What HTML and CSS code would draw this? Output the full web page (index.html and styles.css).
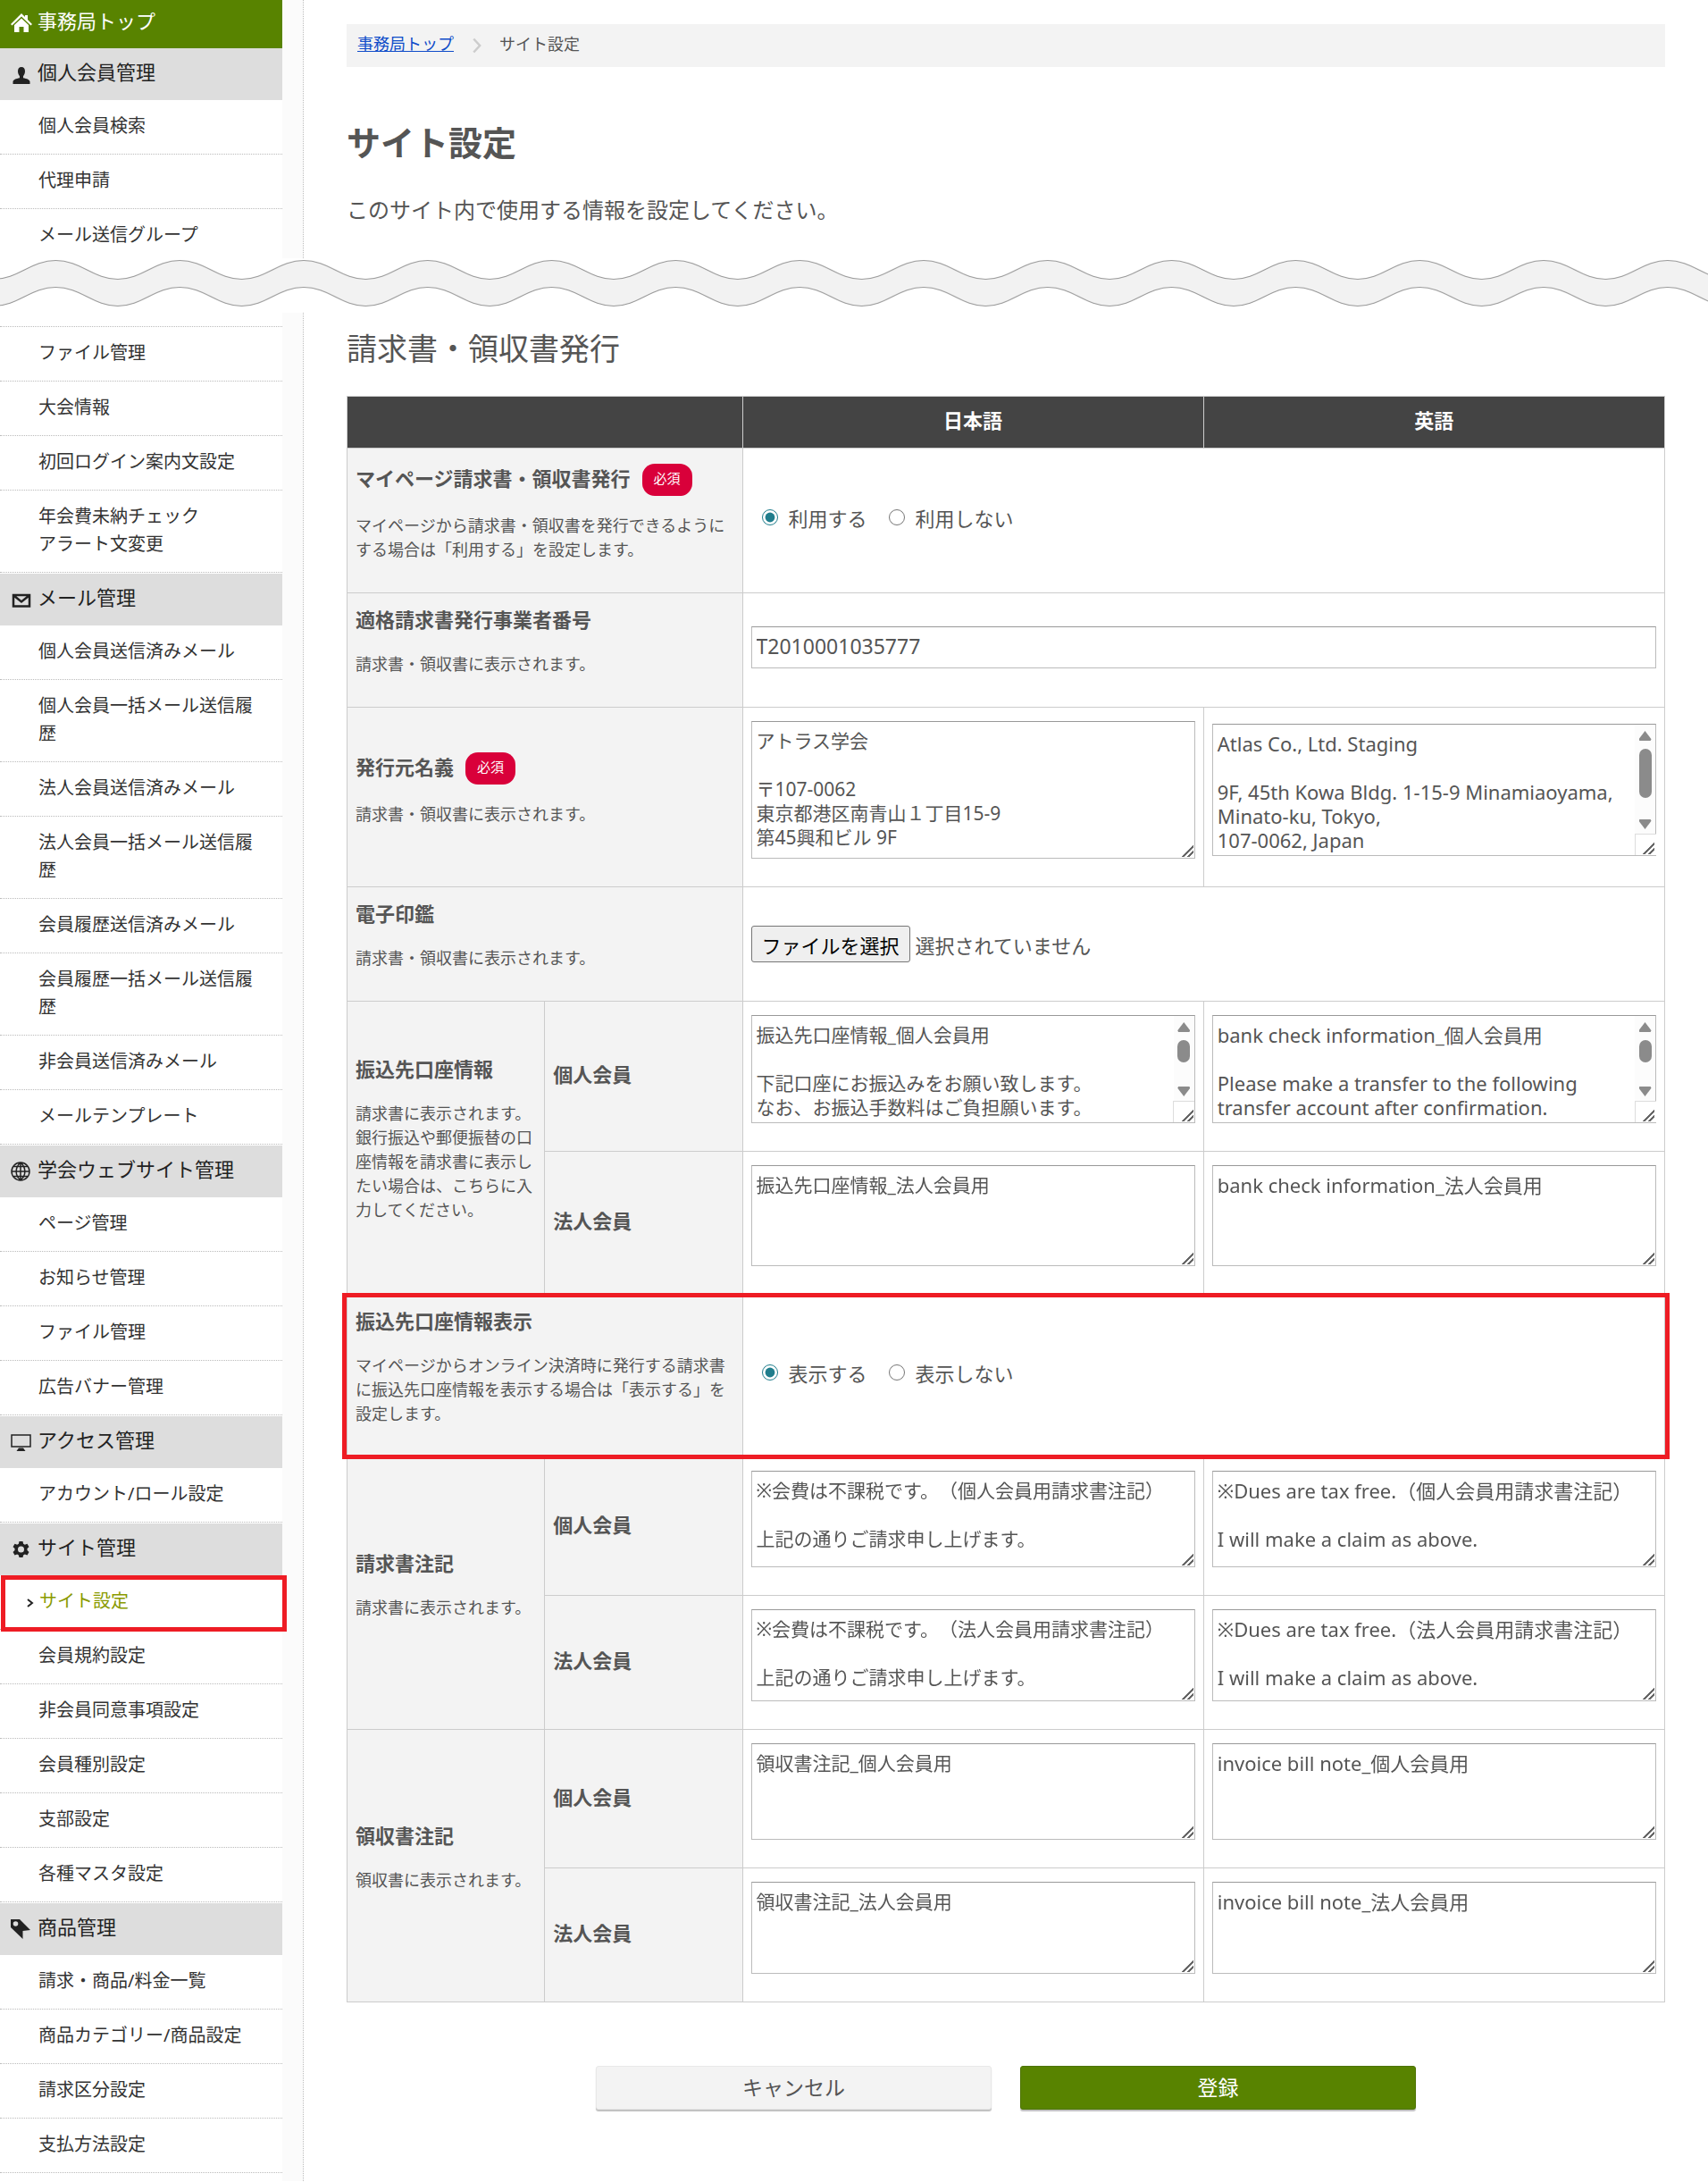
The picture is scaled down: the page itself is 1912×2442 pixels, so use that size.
FILE: index.html
```
<!DOCTYPE html>
<html lang="ja">
  <head>
    <meta charset="UTF-8" />
    <meta name="viewport" content="width=device-width, initial-scale=1.0" />
    <title>サイト設定</title>
    <link rel="stylesheet" href="styles.css">
  </head>
  <body>
    <div class="page page-top">
      <nav class="sidebar">
        <a class="menu-home" href="#">
          <svg class="icon" viewBox="0 0 24 24"><path d="M12 1 16 5V3h3v5l5 5-1.500 1.500L12 4.500 1.500 14.500 0 13z"/><path d="M12 6.500 20 14v8h-5.500V16h-5v6H4V14z"/></svg>
          事務局トップ
        </a>
        <div class="menu-group">
          <h3 class="menu-head">
            <svg class="icon" viewBox="0 0 24 24"><path d="M12 4c2.600 0 4 1.800 4 4.800 0 2.200-.8 4.200-2 5.400v2c4 .8 7.500 2 7.500 4.300V23h-19v-2.500c0-2.300 3.500-3.500 7.500-4.300v-2c-1.200-1.200-2-3.200-2-5.400C8 5.800 9.400 4 12 4z"/></svg>
            個人会員管理
          </h3>
          <ul>
            <li><a href="#">個人会員検索</a></li>
            <li><a href="#">代理申請</a></li>
            <li class="cut"><a href="#">メール送信グループ</a></li>
          </ul>
        </div>
      </nav>
      <main class="content">
        <div class="breadcrumb">
          <a href="#">事務局トップ</a>
          <svg viewBox="0 0 8 14"><path d="M1 1l5.500 6L1 13"/></svg>
          <span>サイト設定</span>
        </div>
        <h1>サイト設定</h1>
        <p class="lead">このサイト内で使用する情報を設定してください。</p>
      </main>
    </div>

    <svg class="wave" height="61">
      <defs>
        <pattern id="waves" x="-7" width="138.800" height="61" patternUnits="userSpaceOnUse">
          <path class="wave-fill" d="M0 23.500C27 23.500 42 2.500 69.400 2.500S111.800 23.500 138.800 23.500V53.500C111.800 53.500 96.800 32.500 69.400 32.500S27 53.500 0 53.500z"/>
          <path class="wave-line" d="M-1 23.500H0C27 23.500 42 2.500 69.400 2.500S111.800 23.500 138.800 23.500h1M-1 53.500H0C27 53.500 42 32.500 69.400 32.500S111.800 53.500 138.800 53.500h1"/>
        </pattern>
      </defs>
      <rect width="100%" height="61" fill="url(#waves)"/>
    </svg>

    <div class="page page-bottom">
      <nav class="sidebar">
        <div class="menu-group">
          <ul>
            <li><a href="#">ファイル管理</a></li>
            <li><a href="#">大会情報</a></li>
            <li><a href="#">初回ログイン案内文設定</a></li>
            <li><a href="#">年会費未納チェック<br>アラート文変更</a></li>
          </ul>
        </div>
        <div class="menu-group">
          <h3 class="menu-head">
            <svg class="icon" viewBox="0 0 24 24"><path class="stroke" d="M3 7h18v12.500H3zM4 8l8 6.500L20 8"/></svg>
            メール管理
          </h3>
          <ul>
            <li><a href="#">個人会員送信済みメール</a></li>
            <li><a href="#">個人会員一括メール送信履歴</a></li>
            <li><a href="#">法人会員送信済みメール</a></li>
            <li><a href="#">法人会員一括メール送信履歴</a></li>
            <li><a href="#">会員履歴送信済みメール</a></li>
            <li><a href="#">会員履歴一括メール送信履歴</a></li>
            <li><a href="#">非会員送信済みメール</a></li>
            <li><a href="#">メールテンプレート</a></li>
          </ul>
        </div>
        <div class="menu-group">
          <h3 class="menu-head">
            <svg class="icon" viewBox="0 0 24 24"><path class="stroke thin" d="M11 2a10 10 0 1 0 0 20 10 10 0 0 0 0-20zM11 2v20M1 12h20M3 6.500h16M3 17.500h16M11 2C4.500 8 4.500 16 11 22M11 2c6.500 6 6.500 14 0 20"/></svg>
            学会ウェブサイト管理
          </h3>
          <ul>
            <li><a href="#">ページ管理</a></li>
            <li><a href="#">お知らせ管理</a></li>
            <li><a href="#">ファイル管理</a></li>
            <li><a href="#">広告バナー管理</a></li>
          </ul>
        </div>
        <div class="menu-group">
          <h3 class="menu-head">
            <svg class="icon" viewBox="0 0 24 24"><path class="stroke thin" d="M1 4h21v13H1z"/><path d="M9 18.500h5l2.500 3.500h-10z"/></svg>
            アクセス管理
          </h3>
          <ul>
            <li><a href="#">アカウント/ロール設定</a></li>
          </ul>
        </div>
        <div class="menu-group">
          <h3 class="menu-head">
            <svg class="icon" viewBox="0 0 24 24"><path fill-rule="evenodd" d="M9.500 3h4l.6 2.700 1.700 1 2.700-.9 2 3.400-2 1.900v2l2 1.900-2 3.400-2.700-.9-1.700 1-.6 2.500h-4l-.6-2.500-1.700-1-2.700.9-2-3.400 2-1.900v-2l-2-1.900 2-3.400 2.700.9 1.700-1zM11.500 8.500a3.500 3.500 0 1 0 0 7 3.500 3.500 0 0 0 0-7z"/></svg>
            サイト管理
          </h3>
          <ul>
            <li class="current"><a href="#"><svg class="arrow" viewBox="0 0 8 10"><path d="M1 1l5 4-5 4"/></svg>サイト設定</a></li>
            <li><a href="#">会員規約設定</a></li>
            <li><a href="#">非会員同意事項設定</a></li>
            <li><a href="#">会員種別設定</a></li>
            <li><a href="#">支部設定</a></li>
            <li><a href="#">各種マスタ設定</a></li>
          </ul>
        </div>
        <div class="menu-group">
          <h3 class="menu-head">
            <svg class="icon" viewBox="0 0 24 24"><path fill-rule="evenodd" d="M0 1h10l12 12-8.500 1v9L0 10zM5.500 3.200a2.800 2.800 0 1 0 0 5.600 2.800 2.800 0 0 0 0-5.600z"/></svg>
            商品管理
          </h3>
          <ul>
            <li><a href="#">請求・商品/料金一覧</a></li>
            <li><a href="#">商品カテゴリー/商品設定</a></li>
            <li><a href="#">請求区分設定</a></li>
            <li><a href="#">支払方法設定</a></li>
          </ul>
        </div>
      </nav>

      <main class="content">
        <h2>請求書・領収書発行</h2>
        <form id="settingForm">
          <table class="setting">
            <colgroup>
              <col class="col-head"><col class="col-head"><col class="col-value"><col class="col-value">
            </colgroup>
            <thead>
              <tr>
                <th colspan="2"></th>
                <th scope="col">日本語</th>
                <th scope="col">英語</th>
              </tr>
            </thead>
            <tbody>
              <tr>
                <th colspan="2" scope="row">
                  <div class="title">マイページ請求書・領収書発行<span class="required">必須</span></div>
                  <p>マイページから請求書・領収書を発行できるようにする場合は「利用する」を設定します。</p>
                </th>
                <td colspan="2">
                  <div class="radios">
                    <label><input type="radio" name="use_invoice" checked>利用する</label>
                    <label><input type="radio" name="use_invoice">利用しない</label>
                  </div>
                </td>
              </tr>
              <tr>
                <th colspan="2" scope="row">
                  <label class="title" for="invoice_no">適格請求書発行事業者番号</label>
                  <p>請求書・領収書に表示されます。</p>
                </th>
                <td colspan="2"><input type="text" id="invoice_no" value="T2010001035777"></td>
              </tr>
              <tr>
                <th colspan="2" scope="row">
                  <div class="title">発行元名義<span class="required">必須</span></div>
                  <p>請求書・領収書に表示されます。</p>
                </th>
                <td>
                  <div class="area">
                    <textarea class="h-issuer" aria-label="発行元名義 日本語">アトラス学会

〒107-0062
東京都港区南青山１丁目15-9
第45興和ビル 9F</textarea>
                  </div>
                </td>
                <td>
                  <div class="area en scroll">
                    <textarea class="h-issuer-en" aria-label="発行元名義 英語">Atlas Co., Ltd. Staging

9F, 45th Kowa Bldg. 1-15-9 Minamiaoyama,
Minato-ku, Tokyo,
107-0062, Japan


</textarea>
                    <div class="scrollbar"><i class="up"></i><i class="thumb thumb-long"></i><i class="down"></i></div>
                  </div>
                </td>
              </tr>
              <tr>
                <th colspan="2" scope="row">
                  <label class="title" for="seal">電子印鑑</label>
                  <p>請求書・領収書に表示されます。</p>
                </th>
                <td colspan="2">
                  <div class="file">
                    <input type="file" id="seal" hidden>
                    <button type="button" id="sealBtn">ファイルを選択</button>
                    <span id="sealName">選択されていません</span>
                  </div>
                </td>
              </tr>
              <tr>
                <th rowspan="2" scope="rowgroup">
                  <div class="title">振込先口座情報</div>
                  <p>請求書に表示されます。<br>銀行振込や郵便振替の口座情報を請求書に表示したい場合は、こちらに入力してください。</p>
                </th>
                <th scope="row">個人会員</th>
                <td>
                  <div class="area scroll">
                    <textarea class="h-bank" aria-label="振込先口座情報 個人会員 日本語">振込先口座情報_個人会員用

下記口座にお振込みをお願い致します。
なお、お振込手数料はご負担願います。




</textarea>
                    <div class="scrollbar"><i class="up"></i><i class="thumb"></i><i class="down"></i></div>
                  </div>
                </td>
                <td>
                  <div class="area en scroll">
                    <textarea class="h-bank" aria-label="振込先口座情報 個人会員 英語">bank check information_個人会員用

Please make a transfer to the following transfer account after confirmation.




</textarea>
                    <div class="scrollbar"><i class="up"></i><i class="thumb"></i><i class="down"></i></div>
                  </div>
                </td>
              </tr>
              <tr>
                <th scope="row">法人会員</th>
                <td><div class="area"><textarea class="h-bank-corp" aria-label="振込先口座情報 法人会員 日本語">振込先口座情報_法人会員用</textarea></div></td>
                <td><div class="area en"><textarea class="h-bank-corp" aria-label="振込先口座情報 法人会員 英語">bank check information_法人会員用</textarea></div></td>
              </tr>
              <tr class="marked">
                <th colspan="2" scope="row">
                  <div class="title">振込先口座情報表示</div>
                  <p>マイページからオンライン決済時に発行する請求書に振込先口座情報を表示する場合は「表示する」を設定します。</p>
                </th>
                <td colspan="2">
                  <div class="radios">
                    <label><input type="radio" name="show_bank" checked>表示する</label>
                    <label><input type="radio" name="show_bank">表示しない</label>
                  </div>
                </td>
              </tr>
              <tr>
                <th rowspan="2" scope="rowgroup">
                  <div class="title">請求書注記</div>
                  <p>請求書に表示されます。</p>
                </th>
                <th scope="row">個人会員</th>
                <td><div class="area"><textarea class="h-note" aria-label="請求書注記 個人会員 日本語">※会費は不課税です。（個人会員用請求書注記）

上記の通りご請求申し上げます。</textarea></div></td>
                <td><div class="area en"><textarea class="h-note" aria-label="請求書注記 個人会員 英語">※Dues are tax free.（個人会員用請求書注記）

I will make a claim as above.</textarea></div></td>
              </tr>
              <tr>
                <th scope="row">法人会員</th>
                <td><div class="area"><textarea class="h-note-corp" aria-label="請求書注記 法人会員 日本語">※会費は不課税です。（法人会員用請求書注記）

上記の通りご請求申し上げます。</textarea></div></td>
                <td><div class="area en"><textarea class="h-note-corp" aria-label="請求書注記 法人会員 英語">※Dues are tax free.（法人会員用請求書注記）

I will make a claim as above.</textarea></div></td>
              </tr>
              <tr>
                <th rowspan="2" scope="rowgroup">
                  <div class="title">領収書注記</div>
                  <p>領収書に表示されます。</p>
                </th>
                <th scope="row">個人会員</th>
                <td><div class="area"><textarea class="h-note" aria-label="領収書注記 個人会員 日本語">領収書注記_個人会員用</textarea></div></td>
                <td><div class="area en"><textarea class="h-note" aria-label="領収書注記 個人会員 英語">invoice bill note_個人会員用</textarea></div></td>
              </tr>
              <tr>
                <th scope="row">法人会員</th>
                <td><div class="area"><textarea class="h-note-corp" aria-label="領収書注記 法人会員 日本語">領収書注記_法人会員用</textarea></div></td>
                <td><div class="area en"><textarea class="h-note-corp" aria-label="領収書注記 法人会員 英語">invoice bill note_法人会員用</textarea></div></td>
              </tr>
            </tbody>
          </table>
          <div class="buttons">
            <button type="button" class="btn">キャンセル</button>
            <button type="submit" class="btn btn-primary">登録</button>
          </div>
        </form>
      </main>
    </div>
    <script>
      const seal = document.getElementById("seal");
      document.getElementById("sealBtn").onclick = function () {
        seal.click();
      };
      seal.onchange = function () {
        document.getElementById("sealName").innerText = seal.files.length
          ? seal.files[0].name
          : "選択されていません";
      };
    </script>
  </body>
</html>
```

FILE: styles.css
```
* {
  box-sizing: border-box;
}
body {
  margin: 0;
  font-family: "Noto Sans", "Noto Sans CJK JP", sans-serif;
  font-size: 22px;
  text-spacing-trim: space-all;
  color: #555;
  background: #fff;
}
h1, h2, h3, p, ul {
  margin: 0;
  padding: 0;
}
button,
input,
textarea {
  font-family: inherit;
  color: inherit;
  text-spacing-trim: inherit;
}
.page {
  display: flex;
}
.page-top {
  height: 289px;
  overflow: hidden;
}

/* sidebar */
.sidebar {
  flex: none;
  width: 340px;
  padding-right: 23px;
  background: linear-gradient(90deg, #fff 316px, #fbfbfb 316px);
  border-right: 1px dotted #bbb;
}
.menu-home,
.menu-head {
  display: flex;
  align-items: center;
  gap: 6px;
  padding: 0 0 6px 12px;
  font-size: 22px;
  font-weight: 400;
  line-height: 32px;
}
.menu-home {
  height: 54px;
  padding-bottom: 8px;
  background: #588300;
  color: #fff;
  text-decoration: none;
}
.menu-head {
  height: 58px;
  background: #ddd;
  color: #222;
}
.icon {
  flex: none;
  width: 24px;
  height: 24px;
  margin-top: 6px;
  fill: currentColor;
}
.icon .stroke {
  fill: none;
  stroke: currentColor;
  stroke-width: 2.5;
}
.icon .thin {
  stroke-width: 1.5;
}
.menu-group ul {
  list-style: none;
  padding-bottom: 1px;
}
.menu-group li {
  padding: 13px 24px 16px 43px;
  border-bottom: 1px dotted #bbb;
  font-size: 20px;
  line-height: 31px;
}
.menu-group li.cut {
  border-bottom: none;
}
.menu-group a {
  color: #333;
  text-decoration: none;
}
.menu-group .menu-home,
.menu-home {
  color: #fff;
}
.menu-group .current {
  position: relative;
}
.menu-group .current::after {
  content: "";
  position: absolute;
  inset: 0 -5px -3px 1px;
  border: 5px solid #ee1c24;
}
.menu-group .current a {
  color: #8a9a00;
}
.arrow {
  width: 8px;
  height: 10px;
  margin: 0 6px 0 -13px;
  fill: none;
  stroke: #222;
  stroke-width: 2;
}
.page-bottom .sidebar {
  padding-bottom: 8px;
}
.page-bottom .menu-group:first-child {
  padding-top: 15px;
}
.page-bottom .menu-group:first-child ul {
  border-top: 1px dotted #bbb;
}

/* torn part between the two halves */
.wave {
  display: block;
  width: 100%;
}
.wave-fill {
  fill: #f2f2f2;
}
.wave-line {
  fill: none;
  stroke: #999;
  stroke-width: 1.2;
}

/* main */
.content {
  flex: 1;
  min-width: 0;
  padding: 0 48px;
}
.breadcrumb {
  display: flex;
  align-items: center;
  height: 48px;
  margin-top: 27px;
  padding: 0 12px 6px;
  background: #f3f3f3;
  font-size: 18px;
}
.breadcrumb a {
  color: #0f4cc9;
}
.breadcrumb svg {
  width: 10px;
  height: 18px;
  margin: 6px 20px 0 21px;
  fill: none;
  stroke: #ccc;
  stroke-width: 2;
}
h1 {
  margin-top: 56px;
  font-size: 38px;
  line-height: 56px;
}
.lead {
  margin-top: 30px;
  font-size: 24px;
  line-height: 36px;
}
h2 {
  margin: 15px 0 27px;
  font-size: 34px;
  font-weight: 400;
  line-height: 51px;
}

/* settings table */
.setting {
  width: 100%;
  table-layout: fixed;
  border-collapse: collapse;
}
.col-head {
  width: 15%;
}
.col-value {
  width: 35%;
}
.setting th,
.setting td {
  padding: 15px 9px;
  border: 1px solid #ccc;
  text-align: left;
  vertical-align: middle;
}
.setting th {
  padding: 13px 9px 17px;
  background: #f3f3f3;
  line-height: 33px;
}
.setting thead th {
  height: 58px;
  padding: 0 9px 4px;
  background: #444;
  color: #fff;
  text-align: center;
}
.title {
  display: flex;
  align-items: center;
}
.setting p {
  margin: 20px 0 17px;
  font-size: 18px;
  font-weight: 400;
  line-height: 27px;
}
.required {
  height: 36px;
  margin: 4px 0 0 13px;
  padding: 0 13px;
  border-radius: 14px;
  background: #d9003a;
  color: #fff;
  font-size: 15px;
  font-weight: 400;
  line-height: 32px;
}
.setting input[type="text"],
.setting textarea {
  display: block;
  width: 100%;
  padding: 8px 5px 0;
  border: 1px solid #bbb;
  border-top-color: #999;
  background: #fff;
}
.setting input[type="text"] {
  height: 47px;
  margin-bottom: 6px;
  padding: 0 5px 4px;
  font-size: 23px;
}
.setting textarea {
  overflow: hidden;
  font-size: 21px;
  line-height: 27px;
  resize: vertical;
}
.area {
  position: relative;
  margin-bottom: 16px;
}
.area.en textarea {
  font-size: 22px;
}
.area.scroll textarea {
  padding-right: 28px;
  overflow-y: auto;
}
/* grip of the text box */
.area::after {
  content: "";
  position: absolute;
  right: 2px;
  bottom: 2px;
  width: 13px;
  height: 13px;
  background: linear-gradient(135deg, #fff 48%, #666 48% 58%, #fff 58% 72%, #666 72% 82%, #fff 82%);
  pointer-events: none;
}
.h-issuer {
  height: 154px;
}
.h-issuer-en {
  height: 148px;
}
.h-bank {
  height: 121px;
}
.h-bank-corp {
  height: 113px;
}
.h-note {
  height: 108px;
}
.h-note-corp {
  height: 103px;
}

/* scrollbars of the long text boxes */
.scrollbar {
  position: absolute;
  inset: 1px 1px 1px auto;
  display: flex;
  flex-direction: column;
  align-items: center;
  width: 23px;
  padding: 7px 0 29px;
  background: #fcfcfc;
  pointer-events: none;
}
.scrollbar::after {
  content: "";
  position: absolute;
  bottom: 0;
  width: 23px;
  height: 23px;
  border: 1px solid #ddd;
  border-width: 1px 0 0 1px;
  background: #fff;
}
.up,
.down {
  width: 14px;
  height: 11px;
  background: #8b8b8b;
  clip-path: polygon(50% 0, 100% 85%, 94% 100%, 6% 100%, 0 85%);
}
.down {
  margin-top: auto;
  clip-path: polygon(50% 100%, 100% 15%, 94% 0, 6% 0, 0 15%);
}
.thumb {
  width: 14px;
  height: 25px;
  margin-top: 9px;
  border-radius: 7px;
  background: #8b8b8b;
}
.thumb-long {
  height: 55px;
}

.radios {
  display: flex;
  gap: 24px;
  margin-bottom: 8px;
  padding-left: 12px;
}
.radios label {
  display: flex;
  align-items: center;
  gap: 12px;
}
.radios input {
  width: 18px;
  height: 18px;
  margin: 0;
  accent-color: #1f7d8c;
}
.file {
  display: flex;
  align-items: center;
  gap: 6px;
}
.file button {
  height: 41px;
  padding: 0 11px;
  border: 1px solid #767676;
  border-radius: 3px;
  background: #efefef;
  color: #000;
  font-size: 22px;
}

/* row with the red frame */
.marked {
  position: relative;
}
.marked::after {
  content: "";
  position: absolute;
  inset: -2px -5px -2px -6px;
  border: 5px solid #ee1c24;
}

.buttons {
  display: flex;
  justify-content: center;
  gap: 32px;
  margin-top: 71px;
}
.btn {
  width: 30%;
  height: 49px;
  padding: 0 0 4px;
  border: 1px solid #e8e8e8;
  border-radius: 3px;
  background: #f3f3f3;
  box-shadow: 0 2px 1px rgba(0,0,0,0.25);
  font-size: 23px;
}
.btn-primary {
  border-color: #4c7300;
  background: #588300;
  color: #fff;
}
```
